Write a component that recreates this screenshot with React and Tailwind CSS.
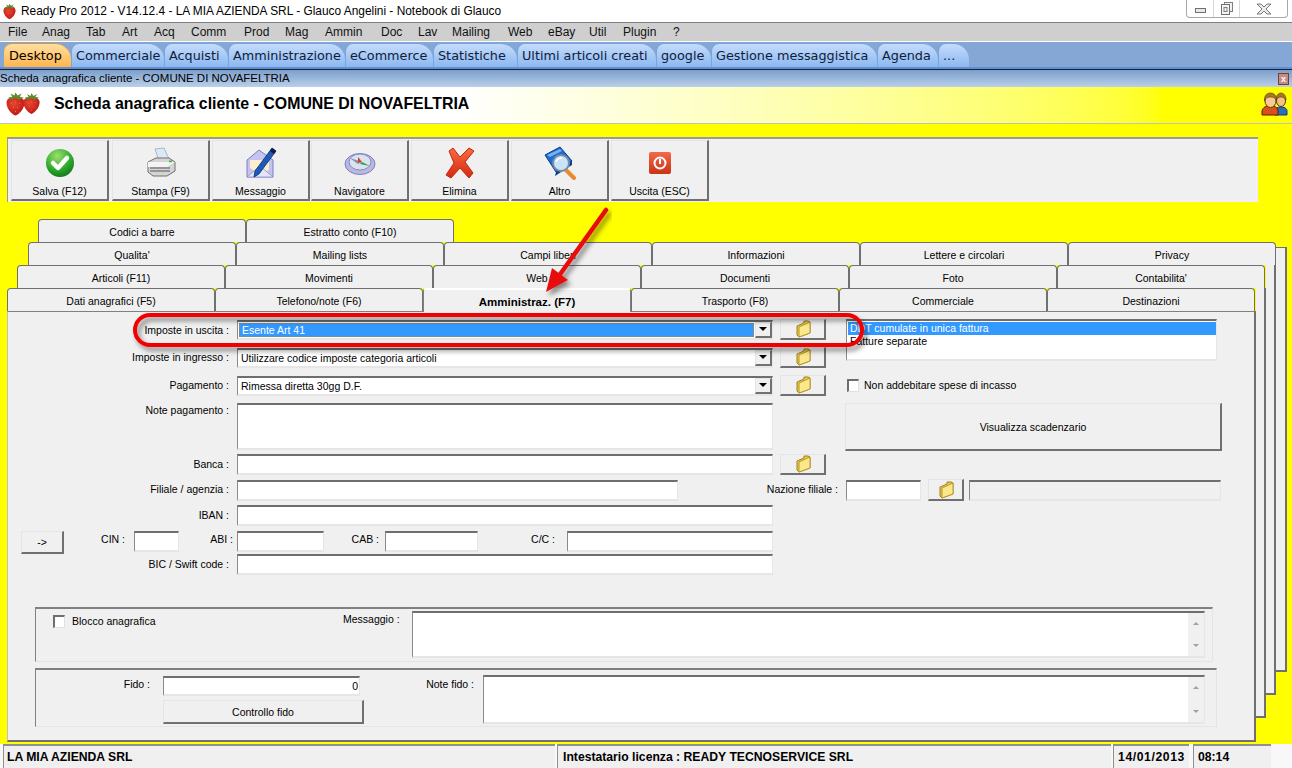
import React from 'react'

const sunken = 'bg-white border-t-2 border-l border-r border-b-2 border-t-[#6e6e6e] border-l-[#8a8a8a] border-r-[#e6e6e6] border-b-[#e6e6e6]'
const raised = 'bg-[#f0f0f0] border-t border-l border-r-2 border-b-2 border-t-[#e4e4e4] border-l-[#e4e4e4] border-r-[#707070] border-b-[#707070]'

const menu = [
  ['File', 'w-[34px]'], ['Anag', 'w-[44px]'], ['Tab', 'w-[36px]'], ['Art', 'w-[32px]'], ['Acq', 'w-[37px]'],
  ['Comm', 'w-[53px]'], ['Prod', 'w-[41px]'], ['Mag', 'w-[40px]'], ['Ammin', 'w-[56px]'], ['Doc', 'w-[37px]'],
  ['Lav', 'w-[34px]'], ['Mailing', 'w-[56px]'], ['Web', 'w-[40px]'], ['eBay', 'w-[41px]'], ['Util', 'w-[34px]'],
  ['Plugin', 'w-[50px]'], ['?', 'w-[20px]'],
]

const topTabs = [
  ['Commerciale', 'w-[93px]'], ['Acquisti', 'w-[64px]'], ['Amministrazione', 'w-[117px]'], ['eCommerce', 'w-[88px]'],
  ['Statistiche', 'w-[84px]'], ['Ultimi articoli creati', 'w-[139px]'], ['google', 'w-[55px]'],
  ['Gestione messaggistica', 'w-[166px]'], ['Agenda', 'w-[61px]'], ['...', 'w-[31px]'],
]

const tabRows = [
  { ml: 'ml-[31px]', tabs: ['Codici a barre', 'Estratto conto (F10)'] },
  { ml: 'ml-[21px]', tabs: ['Qualita\'', 'Mailing lists', 'Campi liberi', 'Informazioni', 'Lettere e circolari', 'Privacy'] },
  { ml: 'ml-[10px]', tabs: ['Articoli (F11)', 'Movimenti', 'Web', 'Documenti', 'Foto', 'Contabilita\''] },
  { ml: 'ml-0', tabs: ['Dati anagrafici (F5)', 'Telefono/note (F6)', 'Amministraz. (F7)', 'Trasporto (F8)', 'Commerciale', 'Destinazioni'] },
]

function Strawberry({ className, id }) {
  return (
    <svg viewBox="0 0 20 24" className={className}>
      <defs>
        <radialGradient id={id} cx="0.4" cy="0.35" r="0.8">
          <stop offset="0" stopColor="#e8452f" />
          <stop offset="0.7" stopColor="#c41f1a" />
          <stop offset="1" stopColor="#8a1410" />
        </radialGradient>
      </defs>
      <path d="M10 23C5 21 1 15 1.500 10 2 6.500 6 5 10 5.500 14 5 18 6.500 18.500 10 19 15 15 21 10 23Z" fill={`url(#${id})`} />
      <path d="M3 6 7 5 5 2 9 4 10 1 12 4 16 2 14 5 18 6 13 8 10 6 6 8Z" fill="#5c8a2c" />
      <g fill="#e88a70">
        <circle cx="6" cy="11" r=".5" /><circle cx="10" cy="10" r=".5" /><circle cx="14" cy="11" r=".5" />
        <circle cx="8" cy="15" r=".5" /><circle cx="12" cy="15" r=".5" /><circle cx="10" cy="19" r=".5" />
      </g>
    </svg>
  )
}

function Users() {
  return (
    <svg viewBox="0 0 27 24" className="w-[27px] h-[24px]">
      <path d="M14 23v-5c1-2 3-3 5-3h2c3 0 5 2 5 4v4Z" fill="#2a6cc0" stroke="#123a7a" />
      <ellipse cx="20" cy="9" rx="4.500" ry="5.500" fill="#f2c08e" stroke="#5a3a08" />
      <path d="M15 8c0-4 2-7 5-7s5 3 5 7c-1-2-3-3-5-3s-4 1-5 3Z" fill="#a87820" stroke="#5a3a08" strokeWidth=".6" />
      <path d="M1 23v-4c1-4 4-5 7-5h3c3 0 6 2 6 5v4Z" fill="#d8501c" stroke="#6a1404" />
      <ellipse cx="9.500" cy="9" rx="5.500" ry="6.500" fill="#fbc898" stroke="#5a3a08" />
      <path d="M3.500 9c-.5-5 2-8 6-8s6.500 3 6 8c-1-3-3-4-6-4s-5 1-6 4Z" fill="#a87820" stroke="#5a3a08" strokeWidth=".6" />
    </svg>
  )
}

function Folder({ className = '' }) {
  return (
    <svg viewBox="0 0 16 18" className={`w-[16px] h-[18px] ${className}`}>
      <path d="M2 6 9 3 9 1 13 1 15 2 15 13 4 17 2 15Z" fill="#ecc850" stroke="#a08018" strokeWidth="1" />
      <path d="M4 17 4 7 15 2 15 13Z" fill="#fbe88c" stroke="#b89a28" strokeWidth="1" />
    </svg>
  )
}

const toolIcons = {
  save: (
    <svg viewBox="0 0 32 32" className="w-[32px] h-[32px]">
      <defs>
        <radialGradient id="g1" cx="0.4" cy="0.25" r="0.85">
          <stop offset="0" stopColor="#9be06c" />
          <stop offset="0.6" stopColor="#2aa82a" />
          <stop offset="1" stopColor="#0c6a18" />
        </radialGradient>
      </defs>
      <circle cx="16" cy="16" r="14" fill="url(#g1)" />
      <path d="M9 16 14 21 23 11" fill="none" stroke="#fff" strokeWidth="4.500" strokeLinecap="round" strokeLinejoin="round" />
    </svg>
  ),
  print: (
    <svg viewBox="0 0 32 32" className="w-[32px] h-[32px]">
      <path d="M10 2 19 1 24 12 14 14Z" fill="#dce8f6" stroke="#9aa8b8" strokeWidth=".8" />
      <path d="M3 15 11 11 24 11 30 15 30 24 22 29 8 29 3 25Z" fill="#d4d4d4" stroke="#707070" />
      <path d="M3 15 22 15 30 15 22 20 3 20Z" fill="#f4f4f4" />
      <path d="M5 21H25M5 24H25" stroke="#808080" strokeWidth="1.500" />
      <rect x="24" y="13.500" width="3" height="1.800" fill="#44b844" />
    </svg>
  ),
  message: (
    <svg viewBox="0 0 32 34" className="w-[32px] h-[34px]">
      <path d="M2 14 14 4 28 14 28 31 2 31Z" fill="#c4c4ee" stroke="#7c7cc8" />
      <path d="M5 14H24V24L14 28 5 22Z" fill="#fbeed0" />
      <path d="M2 31 15 20 28 31Z" fill="#e4e4fa" stroke="#9090d0" strokeWidth=".8" />
      <path d="M27 2 31 5 14 28 9 31 10 25Z" fill="#1c5cb8" stroke="#0c2c70" strokeWidth=".8" />
      <path d="M27 2 31 5 29 8 25 5Z" fill="#1a1a40" />
    </svg>
  ),
  nav: (
    <svg viewBox="0 0 32 24" className="w-[32px] h-[24px]">
      <ellipse cx="16" cy="13" rx="15" ry="10.500" fill="#b8b8e4" stroke="#8080b8" />
      <ellipse cx="16" cy="11" rx="11" ry="8" fill="#d8e2f0" stroke="#8a8ab8" />
      <path d="M6 7 18 11 14 13Z" fill="#8a8aa0" />
      <path d="M14 6 18 11 14 11Z" fill="#e03820" />
      <path d="M18 11 26 15 16 13Z" fill="#30a040" />
    </svg>
  ),
  del: (
    <svg viewBox="0 0 30 32" className="w-[30px] h-[32px]">
      <defs>
        <linearGradient id="g2" x1="0" y1="0" x2="0" y2="1">
          <stop offset="0" stopColor="#fb6a40" />
          <stop offset="1" stopColor="#d42a10" />
        </linearGradient>
      </defs>
      <path d="M4 4 8 1 15 10 24 1 29 4 20 15 28 26 24 31 15 21 6 31 1 28 9 16Z" fill="url(#g2)" stroke="#c02810" strokeLinejoin="round" />
    </svg>
  ),
  more: (
    <svg viewBox="0 0 32 34" className="w-[32px] h-[34px]">
      <path d="M1 9 16 1 28 15 12 26Z" fill="#1e6cd0" stroke="#0c3a90" />
      <path d="M12 26 11 30 28 19 28 15Z" fill="#0c3c90" />
      <path d="M3 9 16 3 18 5 6 11Z" fill="#78b0f0" />
      <path d="M20 22 30 32" stroke="#e88a30" strokeWidth="4" strokeLinecap="round" />
      <circle cx="17" cy="17" r="8" fill="#c8e4fa" stroke="#7a8ca0" strokeWidth="2" />
      <path d="M12 16c1-3 3-4 6-4" stroke="#fff" strokeWidth="1.500" fill="none" />
    </svg>
  ),
  exit: (
    <svg viewBox="0 0 24 24" className="w-[24px] h-[24px]">
      <defs>
        <linearGradient id="g3" x1="0" y1="0" x2="0" y2="1">
          <stop offset="0" stopColor="#f4684a" />
          <stop offset="1" stopColor="#c83414" />
        </linearGradient>
      </defs>
      <rect x="1" y="1" width="22" height="22" rx="2" fill="url(#g3)" />
      <circle cx="12" cy="12" r="5.500" fill="none" stroke="#fff" strokeWidth="2" />
      <path d="M12 8V13" stroke="#fff" strokeWidth="2" />
    </svg>
  ),
}

const tools = [
  ['Salva (F12)', 'save', 'ml-0'], ['Stampa (F9)', 'print', 'ml-[3px]'], ['Messaggio', 'message', 'ml-[2px]'],
  ['Navigatore', 'nav', 'ml-[1px]'], ['Elimina', 'del', 'ml-[2px]'], ['Altro', 'more', 'ml-[2px]'], ['Uscita (ESC)', 'exit', 'ml-[2px]'],
]

function Label({ className, children }) {
  return <div className={`text-right whitespace-nowrap ${className}`}>{children}</div>
}

function FolderBtn({ className = 'w-[46px] h-[21px]' }) {
  return (
    <div className={`${raised} flex items-center justify-center shrink-0 ${className}`}>
      <Folder />
    </div>
  )
}

function Combo({ value, selected }) {
  return (
    <div className={`${sunken} w-[536px] h-[20px] flex items-stretch`}>
      {selected ? (
        <div className="flex-1 m-px bg-[#3399ff] text-white border border-dotted border-[#c08020] pl-[2px] leading-[13px]">{value}</div>
      ) : (
        <div className="flex-1 pl-[3px] leading-[16px]">{value}</div>
      )}
      <div className={`${raised} w-[17px] flex items-center justify-center`}>
        <div className="w-0 h-0 border-x-[4px] border-x-transparent border-t-[4px] border-t-black" />
      </div>
    </div>
  )
}

function TextArea({ className }) {
  return (
    <div className={`${sunken} flex justify-end ${className}`}>
      <div className="w-[16px] bg-[#f0f0f0] flex flex-col items-center justify-between py-[9px]">
        <div className="w-0 h-0 border-x-[3px] border-x-transparent border-b-[3px] border-b-[#a0a0a0]" />
        <div className="w-0 h-0 border-x-[3px] border-x-transparent border-t-[3px] border-t-[#a0a0a0]" />
      </div>
    </div>
  )
}

function Check() {
  return <div className="w-[12px] h-[13px] bg-white border-t-2 border-l-2 border-t-[#6e6e6e] border-l-[#6e6e6e] border-r border-b border-[#e0e0e0] shrink-0" />
}

export default function App() {
  return (
    <div className="relative w-[1292px] h-[768px] overflow-hidden flex flex-col bg-white text-[10.5px] leading-[14px] text-black font-['Liberation_Sans',sans-serif]">
      {/* Window title */}
      <div className="h-[22px] shrink-0 flex items-start bg-white">
        <Strawberry id="s0" className="w-[15px] h-[17px] ml-[2px] mt-[3px]" />
        <div className="ml-[4px] mt-[4px] text-[11.9px] leading-[14px] whitespace-nowrap">Ready Pro 2012 - V14.12.4 - LA MIA AZIENDA SRL - Glauco Angelini - Notebook di Glauco</div>
        <div className="ml-auto mr-[4px] w-[102px] h-[18px] flex border border-t-0 border-[#a8a8a8] rounded-b-[4px] bg-white">
          <div className="w-[27px] flex items-center justify-center border-r border-[#d8d8d8]">
            <div className="w-[11px] h-[5px] border border-[#707070] bg-[#e8e8e8] mt-[4px]" />
          </div>
          <div className="w-[26px] flex items-center justify-center border-r border-[#d8d8d8]">
            <svg viewBox="0 0 12 13" className="w-[12px] h-[13px]">
              <rect x="3.500" y=".5" width="8" height="9" fill="#f0f0f0" stroke="#808080" />
              <rect x=".5" y="2.500" width="8" height="10" fill="#f4f4f4" stroke="#707070" />
              <rect x="3" y="5.500" width="3" height="4" fill="none" stroke="#808080" />
            </svg>
          </div>
          <div className="flex-1 flex items-center justify-center">
            <svg viewBox="0 0 16 12" className="w-[16px] h-[12px]">
              <path d="M1 1H5L8 4 11 1H15L10 6 15 11H11L8 8 5 11H1L6 6Z" fill="#ececec" stroke="#7a7a7a" />
            </svg>
          </div>
        </div>
      </div>

      {/* Menu */}
      <div className="h-[19px] shrink-0 bg-[#cfcfcf] border-t border-[#808080] flex items-center pl-[8px] text-[12px]">
        {menu.map(([name, w]) => (
          <div key={name} className={`${w} text-[#111]`}>{name}</div>
        ))}
      </div>

      {/* Top tabs */}
      <div className="h-[28px] shrink-0 bg-[#84a7d6] border-t border-white border-b-2 border-b-[#5c90dc] flex items-end pl-[4px] font-['DejaVu_Sans',sans-serif] text-[12.8px]">
        <div className="w-[67px] h-[24px] pl-[5px] rounded-tl-[8px] rounded-tr-[16px] bg-linear-to-b from-[#ffdf9e] to-[#ffb54a] border-t border-[#d89a40] leading-[24px]">Desktop</div>
        {topTabs.map(([name, w]) => (
          <div key={name} className={`${w} h-[24px] pl-[4px] rounded-tl-[8px] rounded-tr-[16px] bg-linear-to-b from-[#c4dcfc] to-[#8cb8f0] border-t border-l border-[#7aa4dc] leading-[24px] whitespace-nowrap text-[#10203a]`}>{name}</div>
        ))}
      </div>

      {/* Child window caption */}
      <div className="h-[18px] shrink-0 border-t border-[#222] bg-linear-to-b from-[#7c9fca] to-[#bad0ea] flex items-center">
        <div className="text-[11.5px] whitespace-nowrap -mt-[2px]">Scheda anagrafica cliente - COMUNE DI NOVAFELTRIA</div>
        <div className="ml-auto mr-[3px] w-[11px] h-[12px] bg-[#c88a84] border border-[#70403c] text-white text-[9px] font-bold leading-[10px] text-center">x</div>
      </div>

      {/* Yellow heading */}
      <div className="h-[37px] shrink-0 border-b border-[#c0c0c0] bg-linear-to-r from-white from-35% to-[#ffff00] to-90% flex items-center">
        <div className="flex ml-[5px] mt-[-2px]">
          <Strawberry id="s1" className="w-[21px] h-[26px]" />
          <Strawberry id="s2" className="w-[19px] h-[23px] -ml-[4px] mt-[1px]" />
        </div>
        <div className="ml-[13px] text-[15.9px] leading-[20px] font-bold whitespace-nowrap mt-[-2px]">Scheda anagrafica cliente - COMUNE DI NOVAFELTRIA</div>
        <div className="ml-auto mr-[4px] mt-[-2px]"><Users /></div>
      </div>

      {/* Yellow desktop */}
      <div className="flex-1 min-h-0 bg-[#ffff00] pl-[7px] pt-[13px]">
        <div className="w-[1251px] h-[65px] bg-[#f0f0f0] border-t-2 border-l border-[#9a9a9a] pl-[3px] pt-px flex">
          {tools.map(([label, icon, ml]) => (
            <div key={label} className={`${raised} ${ml} w-[98px] h-[61px] flex flex-col items-center shrink-0`}>
              <div className="h-[38px] pt-[6px] flex items-center justify-center">{toolIcons[icon]}</div>
              <div className="mt-[5px] leading-[14px]">{label}</div>
            </div>
          ))}
        </div>

        {/* Tabbed pages */}
        <div className="relative mt-[17px]">
          <div className="absolute left-[1249px] top-[69px] w-[10px] h-[430px] bg-[#f0f0f0] border-r-2 border-b-2 border-[#707070]" />
          <div className="absolute left-[1259px] top-[46px] w-[10px] h-[430px] bg-[#f0f0f0] border-r-2 border-b-2 border-[#707070]" />
          <div className="absolute left-[1269px] top-[28px] w-[11px] h-[425px] bg-[#f0f0f0] border-r-2 border-b-2 border-t border-[#707070]" />

          {tabRows.map((row) => (
            <div key={row.ml} className={`relative flex ${row.ml}`}>
              {row.tabs.map((t) => (
                t === 'Amministraz. (F7)' ? (
                  <div key={t} className="relative z-10 w-[208px] h-[24px] -mb-px bg-[#f0f0f0] rounded-t-[3px] border-t-2 border-white border-r border-r-[#808080] border-l border-l-[#808080] text-center font-bold leading-[24px] text-[11.5px]">{t}</div>
                ) : (
                  <div key={t} className="w-[208px] h-[23px] bg-[#f0f0f0] rounded-t-[4px] border-t border-x border-[#707070] text-center leading-[24px]">{t}</div>
                )
              ))}
            </div>
          ))}

          {/* Current page */}
          <div className="relative w-[1249px] h-[431px] bg-[#f0f0f0] border-t border-l border-t-[#808080] border-l-[#c0c0c0] border-r-2 border-b-2 border-r-[#707070] border-b-[#707070]">
            <div className="flex pt-[7px]">
              <div className="w-[818px] shrink-0">
                <div className="flex items-center">
                  <Label className="w-[221px]">Imposte in uscita :</Label>
                  <div className="ml-[8px]"><Combo value="Esente Art 41" selected /></div>
                  <div className="ml-[7px]"><FolderBtn /></div>
                </div>
                <div className="flex items-center mt-[7px]">
                  <Label className="w-[221px] pb-px">Imposte in ingresso :</Label>
                  <div className="ml-[8px]"><Combo value="Utilizzare codice imposte categoria articoli" /></div>
                  <div className="ml-[7px]"><FolderBtn /></div>
                </div>
                <div className="flex items-center mt-[7px]">
                  <Label className="w-[221px] pb-px">Pagamento :</Label>
                  <div className="ml-[8px]"><Combo value="Rimessa diretta 30gg D.F." /></div>
                  <div className="ml-[7px]"><FolderBtn /></div>
                </div>
                <div className="flex mt-[7px]">
                  <Label className="w-[221px]">Note pagamento :</Label>
                  <div className={`${sunken} ml-[8px] w-[536px] h-[47px]`} />
                </div>
                <div className="flex items-center mt-[4px]">
                  <Label className="w-[221px] pb-[2px]">Banca :</Label>
                  <div className={`${sunken} ml-[8px] w-[536px] h-[21px]`} />
                  <div className="ml-[7px]"><FolderBtn /></div>
                </div>
              </div>

              <div className="ml-[20px] w-[376px]">
                <div className={`${sunken} w-[371px] h-[42px] pl-px pt-px leading-[13px]`}>
                  <div className="bg-[#3399ff] text-white h-[13px] pl-[2px]">DDT cumulate in unica fattura</div>
                  <div className="pl-[2px]">Fatture separate</div>
                </div>
                <div className="flex items-center mt-[17px] ml-px">
                  <Check />
                  <div className="ml-[5px]">Non addebitare spese di incasso</div>
                </div>
                <div className={`${raised} -ml-px mt-[11px] w-[377px] h-[48px] flex items-center justify-center`}>Visualizza scadenzario</div>
              </div>
            </div>

            <div className="flex items-center mt-[4px]">
              <Label className="w-[221px] pb-[2px]">Filiale / agenzia :</Label>
              <div className={`${sunken} ml-[8px] w-[441px] h-[21px] shrink-0`} />
              <Label className="w-[160px] pb-[2px]">Nazione filiale :</Label>
              <div className={`${sunken} ml-[8px] w-[75px] h-[21px] shrink-0`} />
              <div className="ml-[7px]"><FolderBtn className="w-[36px] h-[22px]" /></div>
              <div className="ml-[5px] w-[252px] h-[21px] bg-[#f0f0f0] border-t-2 border-l border-r border-b-2 border-t-[#6e6e6e] border-l-[#8a8a8a] border-r-[#e6e6e6] border-b-[#e6e6e6]" />
            </div>
            <div className="flex items-center mt-[4px]">
              <Label className="w-[221px] pb-[2px]">IBAN :</Label>
              <div className={`${sunken} ml-[8px] w-[536px] h-[21px]`} />
            </div>
            <div className="flex items-start mt-[5px]">
              <div className={`${raised} ml-[13px] w-[43px] h-[23px] flex items-center justify-center shrink-0`}>-&gt;</div>
              <Label className="w-[61px] leading-[16px]">CIN :</Label>
              <div className={`${sunken} ml-[9px] w-[45px] h-[21px]`} />
              <Label className="w-[54px] leading-[16px]">ABI :</Label>
              <div className={`${sunken} ml-[4px] w-[87px] h-[21px]`} />
              <Label className="w-[55px] leading-[16px]">CAB :</Label>
              <div className={`${sunken} ml-[6px] w-[93px] h-[21px]`} />
              <Label className="w-[77px] leading-[16px]">C/C :</Label>
              <div className={`${sunken} ml-[12px] w-[206px] h-[21px]`} />
            </div>
            <div className="flex items-center">
              <Label className="w-[221px] pb-[2px]">BIC / Swift code :</Label>
              <div className={`${sunken} ml-[8px] w-[536px] h-[21px]`} />
            </div>

            {/* Lock group */}
            <div className="ml-[27px] mt-[32px] w-[1178px] h-[55px] flex items-start border-t-2 border-l border-t-[#808080] border-l-[#808080] border-r border-b border-r-[#e4e4e4] border-b-[#e4e4e4]">
              <div className="flex items-center ml-[17px] mt-[5px] w-[290px]">
                <Check />
                <div className="ml-[7px]">Blocco anagrafica</div>
              </div>
              <Label className="w-[56px] mt-[3px]">Messaggio :</Label>
              <TextArea className="ml-[13px] mt-[2px] w-[793px] h-[47px]" />
            </div>

            {/* Credit group */}
            <div className="ml-[27px] mt-[6px] w-[1182px] h-[59px] flex items-start border-t-2 border-l border-t-[#808080] border-l-[#808080] border-r border-b border-r-[#e4e4e4] border-b-[#e4e4e4]">
              <Label className="w-[114px] mt-[7px]">Fido :</Label>
              <div className="ml-[13px] mt-[6px] w-[201px] shrink-0">
                <div className={`${sunken} w-[197px] h-[20px] text-right pr-[1px] leading-[16px]`}>0</div>
                <div className={`${raised} mt-[4px] h-[24px] flex items-center justify-center`}>Controllo fido</div>
              </div>
              <Label className="w-[110px] mt-[7px]">Note fido :</Label>
              <TextArea className="ml-[9px] mt-[5px] w-[722px] h-[49px]" />
            </div>
          </div>
        </div>
      </div>

      {/* Status bar */}
      <div className="h-[24px] shrink-0 flex bg-[#f8f8f8] pl-[3px] text-[12.2px] font-bold">
        <div className="w-[552px] bg-[#f0f0f0] border-t-2 border-l border-[#909090] pl-[3px] leading-[22px]">LA MIA AZIENDA SRL</div>
        <div className="ml-[2px] w-[554px] bg-[#f0f0f0] border-t-2 border-l border-[#909090] pl-[5px] leading-[22px]">Intestatario licenza : READY TECNOSERVICE SRL</div>
        <div className="ml-[2px] w-[76px] bg-[#f0f0f0] border-t-2 border-l border-[#909090] pl-[4px] leading-[22px] tracking-[0.6px]">14/01/2013</div>
        <div className="ml-[4px] w-[78px] bg-[#f0f0f0] border-t-2 border-l border-[#909090] pl-[4px] leading-[22px]">08:14</div>
      </div>

      {/* Red annotation drawn over the form */}
      <svg viewBox="0 0 1292 768" className="absolute inset-0 w-[1292px] h-[768px] pointer-events-none z-20">
        <defs>
          <filter id="shade" x="-10%" y="-30%" width="120%" height="170%">
            <feDropShadow dx="3" dy="4" stdDeviation="2.500" floodColor="#000" floodOpacity="0.45" />
          </filter>
        </defs>
        <rect x="135" y="315" width="727" height="30" rx="15" fill="none" stroke="#f00000" strokeWidth="4" filter="url(#shade)" />
        <g filter="url(#shade)">
          <path d="M606 210 556 280" stroke="#e81010" strokeWidth="4.500" strokeLinecap="round" />
          <path d="M546 292 552 268 568 280Z" fill="#e81010" />
        </g>
      </svg>
    </div>
  )
}
